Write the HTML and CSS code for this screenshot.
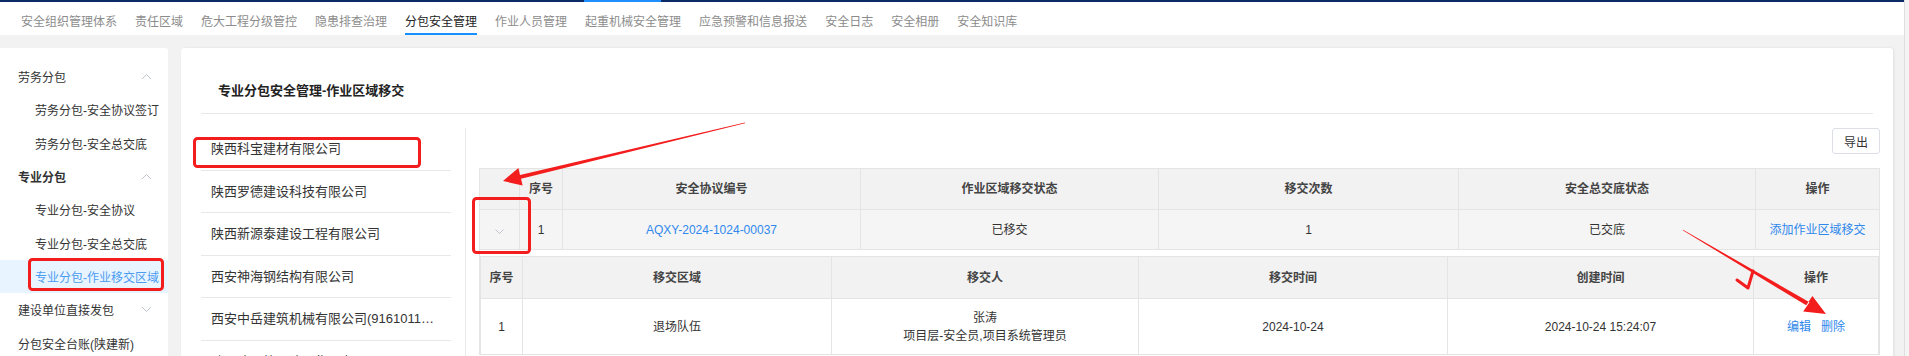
FILE: index.html
```html
<!DOCTYPE html>
<html lang="zh-CN">
<head>
    <meta charset="UTF-8">
    <meta name="viewport" content="width=device-width, initial-scale=1.0">
    <title>分包安全管理</title>
    <link rel="stylesheet" href="styles.css">
</head>
<body>
    <div class="page">
        <div class="top-band"><span class="top-active"></span></div>
        <nav class="tabs">
            <a class="tab">安全组织管理体系</a>
            <a class="tab">责任区域</a>
            <a class="tab">危大工程分级管控</a>
            <a class="tab">隐患排查治理</a>
            <a class="tab active">分包安全管理</a>
            <a class="tab">作业人员管理</a>
            <a class="tab">起重机械安全管理</a>
            <a class="tab">应急预警和信息报送</a>
            <a class="tab">安全日志</a>
            <a class="tab">安全相册</a>
            <a class="tab">安全知识库</a>
        </nav>

        <div class="content">
            <aside class="side">
                <div class="side-group">
                    <span>劳务分包</span>
                    <svg class="chev" width="11" height="7" viewBox="0 0 11 7"><polyline points="1,6 5.5,1.5 10,6"/></svg>
                </div>
                <div class="side-item">劳务分包-安全协议签订</div>
                <div class="side-item">劳务分包-安全总交底</div>
                <div class="side-group open">
                    <span>专业分包</span>
                    <svg class="chev" width="11" height="7" viewBox="0 0 11 7"><polyline points="1,6 5.5,1.5 10,6"/></svg>
                </div>
                <div class="side-item">专业分包-安全协议</div>
                <div class="side-item">专业分包-安全总交底</div>
                <div class="side-item current">专业分包-作业移交区域</div>
                <div class="side-group">
                    <span>建设单位直接发包</span>
                    <svg class="chev" width="11" height="7" viewBox="0 0 11 7"><polyline points="1,1 5.5,5.5 10,1"/></svg>
                </div>
                <div class="side-group">
                    <span>分包安全台账(陕建新)</span>
                </div>
            </aside>

            <main class="card">
                <div class="card-title">专业分包安全管理-作业区域移交</div>
                <div class="card-body">
                    <ul class="company-list">
                        <li>陕西科宝建材有限公司</li>
                        <li>陕西罗德建设科技有限公司</li>
                        <li>陕西新源泰建设工程有限公司</li>
                        <li>西安神海钢结构有限公司</li>
                        <li>西安中岳建筑机械有限公司(91610113MA6W5L2X8K)</li>
                        <li>陕西建工第一建设集团有限公司</li>
                    </ul>

                    <div class="panel">
                        <div class="toolbar">
                            <button class="btn">导出</button>
                        </div>
                        <table class="grid">
                            <colgroup>
                                <col style="width:40px">
                                <col style="width:43px">
                                <col style="width:298px">
                                <col style="width:298px">
                                <col style="width:300px">
                                <col style="width:297px">
                                <col style="width:124px">
                            </colgroup>
                            <thead>
                                <tr>
                                    <th></th>
                                    <th>序号</th>
                                    <th>安全协议编号</th>
                                    <th>作业区域移交状态</th>
                                    <th>移交次数</th>
                                    <th>安全总交底状态</th>
                                    <th>操作</th>
                                </tr>
                            </thead>
                            <tbody>
                                <tr class="row-open">
                                    <td><svg class="expand" width="9" height="5" viewBox="0 0 9 5"><polyline points="0.5,0.5 4.5,4.5 8.5,0.5"/></svg></td>
                                    <td>1</td>
                                    <td><a class="link">AQXY-2024-1024-00037</a></td>
                                    <td>已移交</td>
                                    <td>1</td>
                                    <td>已交底</td>
                                    <td><a class="link">添加作业区域移交</a></td>
                                </tr>
                                <tr>
                                    <td class="detail" colspan="7">
                                        <table class="grid inner">
                                            <colgroup>
                                                <col style="width:42px">
                                                <col style="width:309px">
                                                <col style="width:307px">
                                                <col style="width:309px">
                                                <col style="width:306px">
                                                <col style="width:125px">
                                            </colgroup>
                                            <thead>
                                                <tr>
                                                    <th>序号</th>
                                                    <th>移交区域</th>
                                                    <th>移交人</th>
                                                    <th>移交时间</th>
                                                    <th>创建时间</th>
                                                    <th>操作</th>
                                                </tr>
                                            </thead>
                                            <tbody>
                                                <tr>
                                                    <td>1</td>
                                                    <td>退场队伍</td>
                                                    <td>张涛<br>项目层-安全员,项目系统管理员</td>
                                                    <td>2024-10-24</td>
                                                    <td>2024-10-24 15:24:07</td>
                                                    <td class="ops"><a class="link">编辑</a><a class="link">删除</a></td>
                                                </tr>
                                            </tbody>
                                        </table>
                                    </td>
                                </tr>
                            </tbody>
                        </table>
                    </div>
                </div>
            </main>
        </div>
    </div>
    <div class="scrollbar"></div>

    <!-- red review marks drawn over the page -->
    <svg class="marks" width="1909" height="356" viewBox="0 0 1909 356">
        <rect x="194.5" y="138.5" width="225" height="28" rx="3"/>
        <rect x="29.5" y="259.5" width="133" height="30" rx="3"/>
        <rect x="473.5" y="198.5" width="56" height="54" rx="3"/>
        <polygon class="fill" points="745,123.3 521,178.7 522.6,185.5 503,181 518.4,168 520,174.9 745,122.6"/>
        <polygon class="fill" points="1683,229.7 1809.5,302.3 1803.2,311.6 1826,314 1812.4,296.1 1806.2,305.3 1682.7,230.3"/>
        <polyline class="tick" points="1737,280 1748,288 1753,271"/>
    </svg>
</body>
</html>
```

FILE: styles.css
```css
body {
    margin: 0;
    width: 1909px;
    height: 356px;
    overflow: hidden;
    display: flex;
    position: relative;
    background-color: #f2f2f2;
    font-family: "Liberation Sans", "Noto Sans CJK SC", sans-serif;
    font-size: 12px;
    color: #333;
}

.page {
    width: 1904px;
}

.scrollbar {
    width: 4px;
    background-color: #f4f4f4;
    border-left: 1px solid #dedede;
}

.top-band {
    height: 2px;
    background-color: #0b2a66;
    display: flex;
}

.top-active {
    margin-left: 584px;
    width: 77px;
    background-color: #1e8fff;
}

.tabs {
    display: flex;
    height: 33px;
    padding-left: 12px;
    background-color: white;
}

.tab {
    padding: 11px 9px 2px;
    line-height: 18px;
    color: #8c8c8c;
    text-decoration: none;
    border-bottom: 2px solid transparent;
}

.tab.active {
    color: #222;
    border-bottom-color: #1890ff;
    padding-left: 0;
    padding-right: 0;
    margin: 0 9px;
}

.content {
    display: flex;
    gap: 13px;
    padding: 13px 12px 0 0;
}

/* left menu */
.side {
    width: 168px;
    flex-shrink: 0;
    background-color: white;
    border-radius: 0 3px 0 0;
    padding-top: 12px;
}

.side-group,
.side-item {
    height: 33.3px;
    display: flex;
    align-items: center;
    white-space: nowrap;
}

.side-group {
    justify-content: space-between;
    padding: 0 16px 0 18px;
}

.side-group.open span {
    font-weight: bold;
}

.side-item {
    padding-left: 35px;
}

.side-item.current {
    background-color: #e8f4ff;
    color: #4c9cf2;
}

.chev polyline,
.expand polyline {
    fill: none;
    stroke: #c0c4cc;
    stroke-width: 1;
}

/* main card */
.card {
    flex: 1;
    background-color: white;
    border-radius: 3px 3px 0 0;
    box-shadow: 1px 0 3px rgba(0, 0, 0, 0.08);
}

.card-title {
    margin: 0 20px;
    padding: 33px 17px 12px;
    line-height: 20px;
    font-size: 13px;
    font-weight: bold;
    color: #222;
    border-bottom: 1px solid #e8e8e8;
}

.card-body {
    display: flex;
    padding: 14px 13px 0 20px;
}

.company-list {
    list-style: none;
    margin: 0 14px 0 0;
    padding: 0;
    width: 250px;
    flex-shrink: 0;
}

.company-list li {
    box-sizing: border-box;
    height: 42.6px;
    line-height: 41.6px;
    padding: 0 14px 0 10px;
    font-size: 13px;
    color: #333;
    border-bottom: 1px solid #e8e8e8;
    white-space: nowrap;
    overflow: hidden;
    text-overflow: ellipsis;
}

.panel {
    border-left: 1px solid #e8e8e8;
    padding-left: 13px;
}

.toolbar {
    display: flex;
    justify-content: flex-end;
    margin-bottom: 14px;
}

.btn {
    width: 48px;
    height: 26px;
    padding: 0;
    background: white;
    border: 1px solid #dcdfe6;
    border-radius: 3px;
    font-family: inherit;
    font-size: 12px;
    color: #333;
}

/* tables */
.grid {
    width: 1400px;
    border-collapse: collapse;
    table-layout: fixed;
}

.grid th,
.grid td {
    border: 1px solid #e4e4e4;
    text-align: center;
    padding: 0;
    line-height: 18px;
}

.grid th {
    height: 40px;
    background-color: #f2f2f2;
    font-weight: bold;
    color: #444;
}

.row-open td {
    height: 39px;
    background-color: #f5f5f5;
}

.link {
    color: #2f88ec;
    text-decoration: none;
}

.grid td.detail {
    padding: 6px 0 0 0;
    background: white;
    border-bottom: none;
}

.grid.inner {
    width: 1398px;
    margin-left: 0;
}

.grid.inner th {
    height: 41px;
}

.grid.inner td {
    height: 55px;
    background: white;
}

.ops .link + .link {
    margin-left: 10px;
}

.marks {
    position: absolute;
    left: 0;
    top: 0;
    pointer-events: none;
}

.marks rect,
.marks .tick {
    fill: none;
    stroke: #f41d1d;
    stroke-width: 3;
    stroke-linecap: round;
    stroke-linejoin: round;
}

.marks .fill {
    fill: #f41d1d;
}
```
